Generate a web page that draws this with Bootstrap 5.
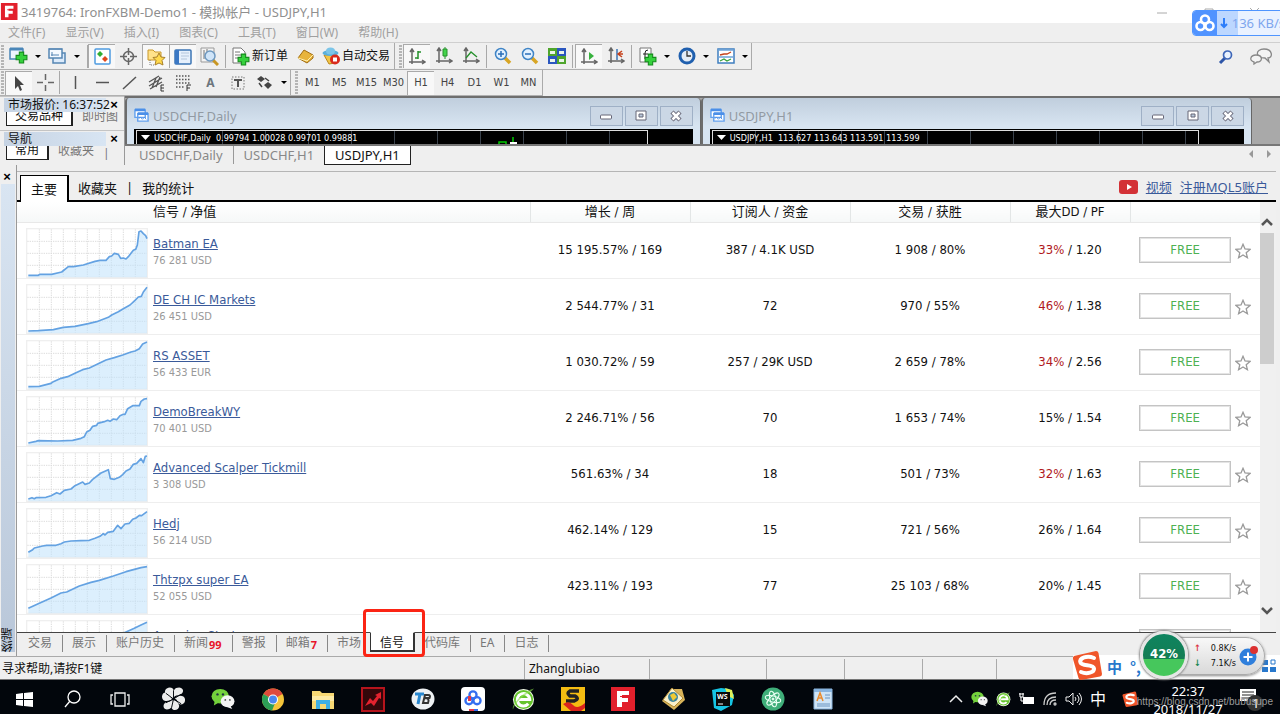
<!DOCTYPE html>
<html lang="zh-CN">
<head>
<meta charset="utf-8">
<meta name="viewport" content="width=device-width, initial-scale=1">
<title>3419764: IronFXBM-Demo1 - 模拟帐户 - USDJPY,H1</title>
<link href="https://cdn.jsdelivr.net/npm/bootstrap@5.3.0/dist/css/bootstrap.min.css" rel="stylesheet">
<script src="https://cdn.jsdelivr.net/npm/bootstrap@5.3.0/dist/js/bootstrap.bundle.min.js" defer></script>
<style>
  body { font: 12px/16px "Noto Sans", "Noto Sans CJK SC", sans-serif; color: #111; background: #efefef; }
  button { border: 0; padding: 0; background: none; color: inherit; font: inherit; }
  svg { flex: none; }
  .desk { height: 100vh; }

  /* title and menu */
  .titlebar { height: 23px; background: #fff; color: #8f8f8f; font-size: 13px; }
  .menubar { height: 20px; border-bottom: 1px solid #cfcfcf; color: #a0a0a0; gap: 20px; padding-left: 8px; }
  .menubar a { color: inherit; text-decoration: none; }

  /* tool bars */
  .toolrow { height: 27px; }
  .toolrow-low { height: 26px; }
  .toolset { border-right: 1px solid #aaa; border-bottom: 1px solid #b0b0b0; }
  .tool { width: 27px; height: 24px; display: flex; align-items: center; justify-content: center; flex: none; }
  .tool.on { background: #f8f8f8; border-top: 1px solid #aaa; border-left: 1px solid #aaa; }
  .tool-text { width: auto; padding: 0 4px 0 3px; gap: 2px; }
  .tool-frame { font-size: 11px; color: #444; font-family: "DejaVu Sans Condensed", sans-serif; }
  .caret { width: 12px; display: flex; justify-content: center; }
  .caret::after { content: ""; border: 3px solid transparent; border-top-color: #000; border-bottom: 0; }
  .divider { width: 1px; height: 23px; background: #a8a8a8; margin: 0 2px; flex: none; }
  .grip { width: 3px; height: 23px; margin: 0 1px; background: repeating-linear-gradient(#b5b5b5 0 2px, #efefef 2px 3px); flex: none; }

  /* side panels */
  .side { width: 125px; border-right: 1px solid #999; }
  .side-panel { height: 34px; border-top: 1px solid #c4c4c4; padding: 1px 4px 0 4px; }
  .side-title { height: 14px; width: 102px; line-height: 14px; padding-left: 4px; font-size: 12px; background: linear-gradient(90deg, #c6d3e3, #d8e5f3); white-space: nowrap; }
  .side-tabs { height: 14px; width: 119px; color: #777; gap: 9px; padding-left: 2px; overflow: hidden; }
  .side-tabs button { white-space: nowrap; line-height: 18px; height: 14px; display: flex; align-items: flex-end; flex: none; }
  .side-tabs .cur { border: 1px solid #222; border-top: 0; border-right-width: 2px; background: #fff; color: #111; padding: 0 8px; }
  .xmark { font: bold 13px/14px "Liberation Sans", sans-serif; width: 12px; color: #000; }

  /* chart windows */
  .mdi { height: 50px; background: #a9a9a9; border-top: 2px solid #6e6e6e; border-bottom: 2px solid #777; }
  .win { background: linear-gradient(#c0cedd, #d7e4f1 28px); border-left: 2px solid #6c6c6c; border-right: 1px solid #666; border-radius: 4px 4px 0 0; padding: 0 7px; min-width: 0; }
  .win-a { flex: 574 1 0; }
  .win-b { flex: 549 1 0; }
  .win-title { height: 31px; color: #929aa3; padding-top: 4px; gap: 2px; font-size: 13px; }
  .win-title span { padding-left: 2px; }
  .win-btn { width: 33px; height: 20px; border: 1px solid #9fb0c6; background: #cbd7e5; display: flex; align-items: center; justify-content: center; }
  .plot { height: 15px; background: #000; padding: 1px 45px 0 2px; }
  .plot-in { border: 1px solid #ddd; border-bottom: 0; height: 14px; color: #fff; font: 9px/15px "DejaVu Sans Condensed", sans-serif; background: repeating-linear-gradient(90deg, transparent 0 42px, #3a424c 42px 43px); white-space: nowrap; overflow: hidden; padding-left: 4px; gap: 4px; }
  .chart-tabs { height: 19px; color: #888; font-size: 13px; padding-left: 4px; }
  .chart-tabs button { height: 18px; padding: 0 10px; border-right: 1px solid #999; line-height: 18px; }
  .chart-tabs .cur { height: 19px; background: #fff; color: #111; border: 1px solid #222; border-top: 0; }

  /* terminal */
  .terminal { min-height: 0; }
  .strip { width: 17px; border-right: 1px solid #999; padding: 5px 0 4px 1px; }
  .strip-bar { background: linear-gradient(#d9e5f2, #b9c7d9); width: 14px; }
  .strip-bar span { writing-mode: vertical-rl; transform: rotate(180deg); line-height: 14px; }
  .panel { border-top: 1px solid #b5b5b5; margin: 6px 4px 0 0; min-width: 0; }
  .panel-tabs { height: 30px; border-bottom: 2px solid #000; font-size: 13px; line-height: 18px; padding-left: 3px; }
  .panel-tabs button { height: 24px; padding: 0 9px; }
  .panel-tabs .cur { height: 27px; background: #fff; border: 1px solid #000; border-right-width: 2px; border-bottom: 0; margin-bottom: -2px; padding: 0 10px; }
  .panel a { color: #3a5a9a; text-decoration: underline; }
  .sheet { background: #fff; min-height: 0; overflow: hidden; }
  .signals { table-layout: fixed; width: 100%; margin: 0; font: 13px/16px "DejaVu Sans Condensed", "Noto Sans CJK SC", sans-serif; text-align: center; }
  .signals th { height: 20px; padding: 0; font-weight: 400; line-height: 18px; background: linear-gradient(#fff, #f6f8f8); border-right: 1px solid #e3e6e6; border-bottom: 1px solid #e8e8e8; }
  .signals th:last-child { border-right: 0; }
  .signals th:first-child { text-align: left; padding-left: 136px; }
  .signals td { height: 56px; padding: 0; border-bottom: 1px solid #eee; vertical-align: middle; }
  .w-a { width: 160px; } .w-b { width: 120px; } .w-c { width: 130px; }
  .sig { height: 55px; padding: 5px 0 0 9px; gap: 5px; text-align: left; }
  .sig small { font-size: 11px; color: #999; line-height: 16px; }
  .sig div { padding-top: 8px; }
  .red { color: #b01820; }
  .free { width: 92px; height: 26px; border: 1px solid #c4c4c4; box-shadow: inset 0 0 0 1px #e4e4e4; color: #4db152; background: #fff; }
  .spark polyline { fill: none; stroke: #64a2e2; stroke-width: 5; stroke-linejoin: round; }
  .spark polygon { fill: #bfe2fc; fill-opacity: .55; }
  .scroller { width: 16px; background: #f0f0f0; padding: 11px 0 0; }
  .scroller i { display: block; height: 131px; width: 14px; background: #cdcdcd; }
  .foot-tabs { height: 24px; border-top: 1px solid #444; color: #777; padding-left: 2px; }
  .foot-tabs button { height: 17px; margin-top: 2px; padding: 0 10px 0 9px; border-right: 1px solid #888; line-height: 15px; white-space: nowrap; display: flex; }
  .foot-tabs button.plain { border-right: 0; padding-right: 9px; }
  .foot-tabs .cur { height: 20px; margin-top: -1px; background: #fff; color: #111; border: 1px solid #333; border-top-color: #fff; border-width: 1px 2px 2px 1px; padding: 2px 9px 0; position: relative; }
  .foot-tabs b { color: #e8142a; font: bold 11px/16px "Noto Sans", sans-serif; padding: 2px 0 0 1px; }
  .marker { position: absolute; inset: -24px -12px -7px -8px; border: 3px solid #fb2414; border-radius: 4px; }

  /* status bar */
  .status { height: 24px; border-top: 1px solid #aaa; border-bottom: 1px solid #777; padding: 2px 0 0 2px; line-height: 20px; }
  .status span { border-left: 1px solid #aaa; padding-left: 4px; }
  .s-a { width: 125px; } .s-b { width: 117px; } .s-c { width: 78px; } .s-d { width: 74px; } .s-e { width: 77px; } .s-f { width: 207px; }

  /* task bar */
  .taskbar { height: 34px; background: #02060c; color: #fff; overflow: hidden; }
  .task { width: 50px; height: 34px; display: flex; align-items: center; justify-content: center; padding-top: 4px; flex: none; }
  .task-s { width: 48px; }
  .tray { padding-top: 4px; }
  .clock { font-size: 13px; line-height: 18px; width: 84px; text-align: center; white-space: nowrap; height: 34px; margin-top: -8px; }

  /* floating widgets */
  .netbox { position: absolute; top: 10px; right: -6px; width: 94px; height: 26px; border: 1px solid #4f95ff; border-radius: 4px; background: #eaf2ff; overflow: hidden; color: #7ea6ee; line-height: 24px; white-space: nowrap; }
  .netbox .logo { width: 29px; background: #5093ff; }
  .netbox .rate { background: linear-gradient(90deg, #bcd7ff 21px, #eaf2ff 21px); padding-left: 3px; font-size: 13px; }
  .ime { position: absolute; right: 0; bottom: 35px; width: 207px; height: 24px; background: #fff; padding-left: 34px; gap: 8px; color: #2878cc; font: bold 15px/24px "Noto Sans CJK SC", sans-serif; }
  .ime .s-logo { position: absolute; left: -1px; bottom: -1px; }
  .ime .grid-logo { position: absolute; right: 4px; bottom: 6px; }
  .speed { position: absolute; right: 15px; bottom: 39px; width: 106px; height: 38px; border-radius: 0 19px 19px 0; background: linear-gradient(#f8f8f8, #d9d9d9); border: 1px solid #aaa; font: 9px/15px "DejaVu Sans Condensed", sans-serif; padding: 3px 28px 0 34px; box-shadow: 0 1px 3px #888; }
  .ball { position: absolute; left: -20px; bottom: -5px; width: 48px; height: 48px; border-radius: 50%; border: 3px solid #e6e6e6; box-shadow: 0 0 2px 1px #888; background: linear-gradient(#0e8460 0, #147d53 60%, #46c75c 60%); color: #fff; font: bold 13px/40px "DejaVu Sans Condensed", sans-serif; text-align: center; }
  .plus { position: absolute; right: 5px; bottom: 8px; }
  .watermark { position: absolute; right: 7px; bottom: 4px; font: 10px/16px "Liberation Sans", sans-serif; color: #9b9b9b; white-space: nowrap; }
</style>
</head>
<body class="overflow-hidden position-relative">
<svg width="0" height="0" class="position-absolute">
  <defs>
    <symbol id="gridlines" viewBox="0 0 366 150">
      <rect x="2" y="2" width="362" height="146" fill="#fff" stroke="#efefef" stroke-width="4"/>
      <path d="M40 4V146M76 4V146M112 4V146M148 4V146M184 4V146M220 4V146M256 4V146M292 4V146M328 4V146M4 40H362M4 76H362M4 112H362" stroke="#dcdcdc" stroke-width="3" stroke-dasharray="4 3"/>
    </symbol>
    <symbol id="star" viewBox="0 0 16 16"><path d="M8 1.300 10 6l5 .400-3.800 3.300 1.200 5L8 12l-4.400 2.700 1.200-5L1 6.400 6 6z" fill="#fff" stroke="#999" stroke-width="1.300"/></symbol>
    <symbol id="wechat" viewBox="0 0 26 24"><ellipse cx="10" cy="9" rx="9.500" ry="8" fill="#74d13c"/><path d="M4 14 3 19l5-3z" fill="#74d13c"/><circle cx="7" cy="7" r="1.300" fill="#234"/><circle cx="13" cy="7" r="1.300" fill="#234"/><ellipse cx="18" cy="14.500" rx="7.500" ry="6.500" fill="#f4f4f4"/><path d="m21 19 2 4-5-2z" fill="#f4f4f4"/><circle cx="15.500" cy="13" r="1" fill="#555"/><circle cx="20.500" cy="13" r="1" fill="#555"/></symbol>
    <symbol id="ebrowser" viewBox="0 0 24 24"><circle cx="12" cy="12.500" r="11" fill="#f2fbe9"/><circle cx="12" cy="12.500" r="10" fill="#65c32c"/><path d="M6 12.500h12.500a6.500 6.500 0 1 0-1.500 4.500" fill="none" stroke="#fff" stroke-width="3.200"/><path d="M1 23C-1 17 14 3 23 1c-3 4-7 5-11 8S3 17 1 23z" fill="#8be04a" opacity=".6"/></symbol>
    <symbol id="sogou" viewBox="0 0 30 30"><path d="M2 6 24 1q2 0 2.500 2L30 24q0 2-2 2.500L9 30q-2 0-2.500-2L1 9q-.500-2 1-3z" fill="#f0562a"/><path d="M22 8C15 5 7 8 8.500 12.500c1.500 4 13 1.500 13.500 6 .500 4-7 6-13 3.500" fill="none" stroke="#fff" stroke-width="4" stroke-linecap="round"/></symbol>
    <symbol id="cloud" viewBox="0 0 20 18"><g fill="none" stroke="currentColor" stroke-width="2.600"><circle cx="10" cy="5.500" r="4"/><circle cx="5.500" cy="12" r="4"/><circle cx="14.500" cy="12" r="4"/></g></symbol>
    <symbol id="redf" viewBox="0 0 24 24"><path fill="#e2202c" d="M0 0h24v24H0z"/><path fill="#fff" d="M6 4h12v4h-7v3h6v4h-6v5H6z"/><path d="M9 9.500h8" stroke="#e2202c"/></symbol>
    <symbol id="axes" viewBox="0 0 18 18"><path d="M4 2v14M1 14h15M2 4l2-3 2 3M14 12l3 2-3 2" fill="none" stroke="#666" stroke-width="1.500"/></symbol>
    <symbol id="minis" viewBox="0 0 12 8"><rect x=".5" y="3" width="11" height="4" rx="1" fill="#fff" stroke="#667"/></symbol>
    <symbol id="maxis" viewBox="0 0 12 12"><path d="M1 1h10v9H1z" fill="#fff" stroke="#667"/><path d="M4 4h4v3H4z" fill="#b9c8da" stroke="#667"/></symbol>
    <symbol id="closes" viewBox="0 0 12 12"><path d="m2 2 8 8M10 2l-8 8" stroke="#667" stroke-width="4.500"/><path d="m2.500 2.500 7 7M9.500 2.500l-7 7" stroke="#fff" stroke-width="2.500"/></symbol>
    <symbol id="chartdoc" viewBox="0 0 16 16"><path d="M1 2h11v8H1zM4 6h11v8H4z" fill="#fff" stroke="#62a0ee" stroke-width="1.500"/><path d="M1 2h11M4 6h11" stroke="#4b8fe8" stroke-width="3"/><path d="m5 11 2-1 2 2 2-2 2 2" fill="none" stroke="#4b8fe8"/></symbol>
    <symbol id="greenplus" viewBox="0 0 12 12"><path d="M4 1h4v3h3v4H8v3H4V8H1V4h3z" fill="#35d13c" stroke="#158b1c"/></symbol>
  </defs>
</svg>

<div class="desk d-flex flex-column">
  <header class="titlebar d-flex align-items-center flex-shrink-0">
    <svg width="21" height="17" viewBox="-1 0 25 24" preserveAspectRatio="xMinYMid"><use href="#redf" width="24" height="24"/></svg>
    <span>3419764: IronFXBM-Demo1 - 模拟帐户 - USDJPY,H1</span>
    <svg class="ms-auto me-3" width="108" height="14" viewBox="0 0 108 14" fill="none" stroke="#aaa"><path d="M1 8h10M47 7h8v7h-8zM49 7V4h8v8h-2M94 3l9 9M103 3l-9 9"/></svg>
  </header>
  <nav class="menubar d-flex align-items-center flex-shrink-0">
    <a href="#">文件(F)</a><a href="#">显示(V)</a><a href="#">插入(I)</a><a href="#">图表(C)</a><a href="#">工具(T)</a><a href="#">窗口(W)</a><a href="#">帮助(H)</a>
  </nav>

  <div class="toolrow d-flex flex-shrink-0">
    <div class="toolset d-flex align-items-center">
      <span class="grip"></span>
      <button class="tool" aria-label="新图表"><svg width="19" height="18" viewBox="0 0 19 18"><path d="M1 2h13v10H1z" fill="#eef5ff" stroke="#4a86b8" stroke-width="1.500"/><path d="M1 2h13" stroke="#4a86b8" stroke-width="3"/><use href="#greenplus" x="6" y="4" width="13" height="13"/></svg></button><span class="caret"></span>
      <button class="tool" aria-label="配置"><svg width="19" height="18" viewBox="0 0 19 18"><path d="M5 6h12v10H5z" fill="#dcebfb" stroke="#5686b4" stroke-width="1.500"/><path d="M1 2h13v9H1z" fill="#f4f9ff" stroke="#5686b4" stroke-width="1.500"/><path d="M3 8h8M4 5v4M1 2h13" stroke="#5686b4"/></svg></button><span class="caret me-1"></span>
      <span class="divider ms-0 me-0"></span>
      <button class="tool on" aria-label="市场报价"><svg width="17" height="17" viewBox="0 0 17 17"><rect x="1" y="1" width="15" height="15" rx="1" fill="#fff" stroke="#4d9ae0" stroke-width="1.500"/><path d="m6 3 3 3-3 3-3-3z" fill="#2fae32"/><path d="m11 8 3 3-3 3-3-3z" fill="#e0481c"/></svg></button>
      <button class="tool" aria-label="数据窗口"><svg width="17" height="17" viewBox="0 0 17 17" fill="none" stroke="#666" stroke-width="1.500"><circle cx="8.500" cy="8.500" r="5"/><path d="M8.500 0v7M8.500 10v7M0 8.500h7M10 8.500h7"/></svg></button>
      <button class="tool on" aria-label="导航"><svg width="19" height="18" viewBox="0 0 19 18"><path d="M1 2h5l2 2h6v8H1z" fill="#ffe28a" stroke="#c9982a"/><path d="M3 12v5h5" fill="none" stroke="#777" stroke-dasharray="1 1"/><path d="m12 5 2 4 4 .500-3 3 1 4.500-4-2-4 2 1-4.500-3-3 4-.500z" fill="#ffd94c" stroke="#a8802a"/></svg></button>
      <button class="tool on" aria-label="终端"><svg width="18" height="16" viewBox="0 0 18 16"><rect x="1" y="1" width="16" height="14" rx="1" fill="#e6f0fc" stroke="#3b74b4" stroke-width="1.500"/><path d="M1 1h4v14H1z" fill="#3b78c4"/><path d="M7 4h8M7 7h8M7 10h6" stroke="#b4c6dc"/></svg></button>
      <button class="tool" aria-label="策略测试"><svg width="19" height="19" viewBox="0 0 19 19"><path d="M1 1h13v14H1z" fill="#f4f4f4" stroke="#999"/><path d="M4 3v9M7 2v7" stroke="#777"/><path d="m13 13 5 5" stroke="#c89622" stroke-width="3"/><circle cx="10" cy="9" r="5" fill="#cfe4f8" stroke="#6d98c0" stroke-width="1.500"/></svg></button>
      <span class="divider"></span>
      <button class="tool tool-text"><svg width="19" height="19" viewBox="0 0 19 19"><path d="M2 1h8l4 4v11H2z" fill="#fff" stroke="#777"/><path d="M4 5h5M4 8h7M4 11h5" stroke="#777"/><use href="#greenplus" x="6" y="6" width="13" height="13"/></svg>新订单</button>
      <button class="tool" aria-label="编辑器"><svg width="17" height="15" viewBox="0 0 17 15"><path d="m1 9 6-8 9 5v3l-6 5z" fill="#e8b43c" stroke="#a06c12"/><path d="m1 9 9 3 6-6" fill="none" stroke="#fff0b0"/></svg></button>
      <button class="tool tool-text"><svg width="18" height="18" viewBox="0 0 18 18"><path d="M2 8h13l-2 8-6 1z" fill="#f2c546" stroke="#b9861d"/><ellipse cx="8.500" cy="6" rx="8" ry="3" fill="#5bb0dc"/><ellipse cx="8.500" cy="4" rx="4.500" ry="3.500" fill="#7cc5e8"/><circle cx="13" cy="12.500" r="5" fill="#d92a1c"/><path d="M11 10.500h4v4h-4z" fill="#fff"/></svg>自动交易</button>
    </div>
    <div class="toolset d-flex align-items-center">
      <span class="grip ms-1"></span>
      <button class="tool on" aria-label="柱状图"><svg width="18" height="18" viewBox="0 0 18 18"><use href="#axes"/><path d="M10 3v8M10 4h3M7 10h3" stroke="#25902b" stroke-width="1.500"/></svg></button>
      <button class="tool" aria-label="阴阳烛"><svg width="18" height="18" viewBox="0 0 18 18"><use href="#axes"/><path d="M10 0v12" stroke="#25902b"/><path d="M8 2h4v7H8z" fill="#42d34a" stroke="#25902b"/></svg></button>
      <button class="tool" aria-label="折线图"><svg width="18" height="18" viewBox="0 0 18 18"><use href="#axes"/><path d="m4 11 5-6 6 5" fill="none" stroke="#25902b" stroke-width="1.300"/></svg></button>
      <span class="divider"></span>
      <button class="tool" aria-label="放大"><svg width="18" height="18" viewBox="0 0 18 18"><path d="m11 11 5 5" stroke="#d8a524" stroke-width="3.500"/><circle cx="7" cy="7" r="5.500" fill="#e2f1ff" stroke="#3f84c6" stroke-width="1.500"/><path d="M4 7h6M7 4v6" stroke="#2a6eb8" stroke-width="1.500"/></svg></button>
      <button class="tool" aria-label="缩小"><svg width="18" height="18" viewBox="0 0 18 18"><path d="m11 11 5 5" stroke="#d8a524" stroke-width="3.500"/><circle cx="7" cy="7" r="5.500" fill="#e2f1ff" stroke="#3f84c6" stroke-width="1.500"/><path d="M4 7h6" stroke="#2a6eb8" stroke-width="1.500"/></svg></button>
      <button class="tool" aria-label="平铺"><svg width="18" height="18" viewBox="0 0 18 18"><path d="M0 1h9v8H0zM9 9h9v8H9z" fill="#4fa52c"/><path d="M9 1h9v8H9zM0 9h9v8H0z" fill="#2a56bf"/><path d="M2 4h5v3H2zM11 4h5v3h-5zM2 12h5v3H2zM11 12h5v3h-5z" fill="#eaf4ea"/></svg></button>
      <span class="divider"></span>
      <button class="tool on" aria-label="自动滚动"><svg width="18" height="18" viewBox="0 0 18 18"><use href="#axes"/><path d="m9 4 5 4-5 4z" fill="#38b23e"/></svg></button>
      <button class="tool" aria-label="图表平移"><svg width="18" height="18" viewBox="0 0 18 18"><use href="#axes"/><path d="M10 2v11" stroke="#3b74b4" stroke-width="1.500"/><path d="m15 4-4 3 4 3M11 7h5" fill="none" stroke="#c5421c" stroke-width="1.500"/></svg></button>
      <span class="divider"></span>
      <button class="tool" aria-label="指标"><svg width="18" height="19" viewBox="0 0 18 19"><path d="M1 1h11v14H1z" fill="#fff" stroke="#777"/><path d="M9 3Q6 3 6 6v6M4 7h5" fill="none" stroke="#222"/><use href="#greenplus" x="5" y="6" width="13" height="13"/></svg></button><span class="caret"></span>
      <button class="tool" aria-label="周期"><svg width="18" height="18" viewBox="0 0 18 18"><circle cx="9" cy="9" r="7" fill="#e4ecf6" stroke="#1f5fae" stroke-width="3"/><path d="M9 4v5h4" fill="none" stroke="#333" stroke-width="1.300"/></svg></button><span class="caret"></span>
      <button class="tool" aria-label="模板"><svg width="18" height="16" viewBox="0 0 18 16"><path d="M1 1h16v14H1z" fill="#fff" stroke="#3f7fc0" stroke-width="1.500"/><path d="M1 2h16M1 9h16" stroke="#6da3d8" stroke-width="1.500"/><path d="m3 7 4-1 3 0 4-2" fill="none" stroke="#c5421c" stroke-width="1.300"/><path d="m3 13 4-2 3 2 4-2" fill="none" stroke="#38a23e" stroke-width="1.300"/></svg></button><span class="caret"></span>
    </div>
    <div class="ms-auto d-flex align-items-center gap-3 pe-1">
      <button aria-label="搜索"><svg width="16" height="16" viewBox="0 0 16 16"><path d="M7 9 2 14" stroke="#2d55a8" stroke-width="3"/><circle cx="9.500" cy="6" r="4" fill="#e9f2ff" stroke="#3d66b8" stroke-width="1.700"/></svg></button>
      <button class="me-1" aria-label="消息"><svg width="22" height="17" viewBox="0 0 22 17" fill="#f4f4f4" stroke="#888" stroke-width="1.300"><path d="M14 1c9 0 9 9 4 9l1 4-4-4C5 10 5 1 14 1z"/><path d="M6 7c7 0 7 7 1 7l-3 2v-2C-1 13 0 7 6 7z"/></svg></button>
    </div>
  </div>

  <div class="toolrow-low d-flex flex-shrink-0">
    <div class="toolset d-flex align-items-center">
      <span class="grip"></span>
      <button class="tool on" aria-label="光标"><svg width="12" height="17" viewBox="0 0 12 17"><path d="M2 1v13l3-3 2 5 2-1-2-5h4z" fill="#444"/></svg></button>
      <button class="tool" aria-label="十字"><svg width="17" height="17" viewBox="0 0 17 17"><path d="M8.500 0v6M8.500 11v6M0 8.500h6M11 8.500h6" stroke="#666" stroke-width="1.500"/></svg></button>
      <span class="divider ms-0"></span>
      <button class="tool" aria-label="垂直线"><svg width="17" height="17"><path d="M8.500 2v13" stroke="#555" stroke-width="1.500"/></svg></button>
      <button class="tool" aria-label="水平线"><svg width="17" height="17"><path d="M2 8.500h13" stroke="#555" stroke-width="1.500"/></svg></button>
      <button class="tool" aria-label="趋势线"><svg width="17" height="17"><path d="M2 15 15 3" stroke="#555" stroke-width="1.500"/></svg></button>
      <button class="tool" aria-label="通道"><svg width="18" height="18" viewBox="0 0 18 18"><path d="M1 8 11 2M1 12 14 4M2 15 14 8M4 14 8 4M8 13 12 3" stroke="#555" stroke-width="1.300"/><path d="M16 11h-3v6h3M13 14h3" fill="none" stroke="#333"/></svg></button>
      <button class="tool" aria-label="斐波纳契"><svg width="18" height="18" viewBox="0 0 18 18"><path d="M1 2h14M1 5.500h14M1 9h14M1 13h9" stroke="#555" stroke-width="1.300" stroke-dasharray="1.500 1.500"/><path d="M16 11h-4v6M12 14h3" fill="none" stroke="#333"/></svg></button>
      <button class="tool fw-bold text-secondary">A</button>
      <button class="tool" aria-label="文本标签"><svg width="16" height="16" viewBox="0 0 16 16"><path d="M2 2h12v12H2z" fill="none" stroke="#777" stroke-dasharray="1.500 1.500"/><path d="M4 5h8M8 5v7" stroke="#555" stroke-width="2"/></svg></button>
      <button class="tool" aria-label="箭头"><svg width="17" height="15" viewBox="0 0 17 15"><path d="m1 4 4-3 4 3-4 3zM8 10l4-3 4 3-4 4z" fill="#444"/><path d="m3 8 3 4M9 3l4 3" stroke="#444" stroke-width="1.500"/></svg></button><span class="caret"></span>
    </div>
    <div class="toolset d-flex align-items-center tool-frame">
      <span class="grip ms-1"></span>
      <button class="tool">M1</button><button class="tool">M5</button><button class="tool">M15</button><button class="tool">M30</button><button class="tool on">H1</button><button class="tool">H4</button><button class="tool">D1</button><button class="tool">W1</button><button class="tool">MN</button>
    </div>
  </div>

  <div class="d-flex flex-shrink-0">
    <aside class="side flex-shrink-0">
      <section class="side-panel">
        <div class="d-flex justify-content-between"><div class="side-title">市场报价: 16:37:52</div><button class="xmark" aria-label="关闭">×</button></div>
        <div class="side-tabs d-flex"><button class="cur">交易品种</button><button>即时图</button></div>
      </section>
      <section class="side-panel">
        <div class="d-flex justify-content-between"><div class="side-title">导航</div><button class="xmark" aria-label="关闭">×</button></div>
        <div class="side-tabs d-flex"><button class="cur">常用</button><button>收藏夹</button><span>|</span></div>
      </section>
    </aside>
    <main class="flex-grow-1">
      <div class="mdi d-flex overflow-hidden">
        <section class="win win-a">
          <div class="win-title d-flex align-items-center">
            <svg width="15" height="15"><use href="#chartdoc"/></svg><span class="me-auto">USDCHF,Daily</span>
            <button class="win-btn" aria-label="最小化"><svg width="12" height="8"><use href="#minis"/></svg></button><button class="win-btn" aria-label="最大化"><svg width="12" height="12"><use href="#maxis"/></svg></button><button class="win-btn" aria-label="关闭"><svg width="12" height="12"><use href="#closes"/></svg></button>
          </div>
          <div class="plot"><div class="plot-in d-flex"><svg width="9" height="13" viewBox="0 0 9 13"><path d="M0 4h9L4.500 9z" fill="#fff"/></svg><span>USDCHF,Daily&nbsp; 0.99794 1.00028 0.99701 0.99881</span><svg class="ms-auto me-5" width="110" height="13"><path d="M10 13v-2h7v2M24 6v6" fill="none" stroke="#0c0" stroke-width="1.500"/><path d="M21 11h7v2h-7z" fill="#fff"/></svg></div></div>
        </section>
        <section class="win win-b">
          <div class="win-title d-flex align-items-center">
            <svg width="15" height="15"><use href="#chartdoc"/></svg><span class="me-auto">USDJPY,H1</span>
            <button class="win-btn" aria-label="最小化"><svg width="12" height="8"><use href="#minis"/></svg></button><button class="win-btn" aria-label="最大化"><svg width="12" height="12"><use href="#maxis"/></svg></button><button class="win-btn" aria-label="关闭"><svg width="12" height="12"><use href="#closes"/></svg></button>
          </div>
          <div class="plot"><div class="plot-in d-flex"><svg width="9" height="13" viewBox="0 0 9 13"><path d="M0 4h9L4.500 9z" fill="#fff"/></svg><span>USDJPY,H1&nbsp; 113.627 113.643 113.591 113.599</span></div></div>
        </section>
        <div class="pe-4 me-1"></div>
      </div>
      <div class="chart-tabs d-flex">
        <button>USDCHF,Daily</button><button class="border-end-0">USDCHF,H1</button><button class="cur">USDJPY,H1</button>
        <svg class="ms-auto me-2" width="24" height="16" viewBox="0 0 24 16" fill="#999"><path d="M5 4v8L1 8zM19 4v8l4-4z"/></svg>
      </div>
    </main>
  </div>

  <div class="terminal d-flex flex-grow-1">
    <div class="strip d-flex flex-column flex-shrink-0">
      <button class="xmark" aria-label="关闭">×</button>
      <div class="strip-bar flex-grow-1 d-flex align-items-end"><span>终端</span></div>
    </div>
    <section class="panel flex-grow-1 d-flex flex-column">
      <div class="panel-tabs d-flex align-items-end flex-shrink-0">
        <button class="cur">主要</button><button>收藏夹</button><span class="pb-1">|</span><button>我的统计</button>
        <div class="ms-auto d-flex align-items-center gap-2 pb-1 me-2">
          <svg width="19" height="14" viewBox="0 0 19 14"><rect width="19" height="14" rx="3" fill="#d33136"/><path d="M8 4v6l5-3z" fill="#fff"/></svg>
          <a href="#">视频</a><a href="#">注册MQL5账户</a>
        </div>
      </div>
      <div class="sheet flex-grow-1 d-flex">
        <div class="flex-grow-1">
          <table class="signals">
            <colgroup><col><col class="w-a"><col class="w-a"><col class="w-a"><col class="w-b"><col class="w-c"></colgroup>
            <thead><tr><th>信号 / 净值</th><th>增长 / 周</th><th>订阅人 / 资金</th><th>交易 / 获胜</th><th>最大DD / PF</th><th></th></tr></thead>
            <tbody>
              <tr><td><div class="sig d-flex"><svg class="spark" width="122" height="50" viewBox="0 0 366 150"><use href="#gridlines"/><polygon points="7,148 7,142 37,142 42,139 77,139 107,132 127,116 142,116 172,111 207,100 222,97 240,97 250,86 257,84 265,76 277,79 284,91 292,90 300,93 307,86 322,67 329,64 334,51 339,11 345,9 352,17 359,23 363,32 363,148"/><polyline points="7,142 37,142 42,139 77,139 107,132 127,116 142,116 172,111 207,100 222,97 240,97 250,86 257,84 265,76 277,79 284,91 292,90 300,93 307,86 322,67 329,64 334,51 339,11 345,9 352,17 359,23 363,32"/></svg><div><a href="#">Batman EA</a><br><small>76 281 USD</small></div></div></td><td>15 195.57% / 169</td><td>387 / 4.1K USD</td><td>1 908 / 80%</td><td><span class="red">33%</span> / 1.20</td><td><button class="free">FREE</button> <svg width="16" height="16"><use href="#star"/></svg></td></tr>
              <tr><td><div class="sig d-flex"><svg class="spark" width="122" height="50" viewBox="0 0 366 150"><use href="#gridlines"/><polygon points="7,148 7,141 37,140 82,137 112,130 147,127 187,119 212,113 247,100 257,93 277,83 292,74 312,63 327,49 337,39 346,37 352,24 363,10 363,148"/><polyline points="7,141 37,140 82,137 112,130 147,127 187,119 212,113 247,100 257,93 277,83 292,74 312,63 327,49 337,39 346,37 352,24 363,10"/></svg><div><a href="#">DE CH IC Markets</a><br><small>26 451 USD</small></div></div></td><td>2 544.77% / 31</td><td>72</td><td>970 / 55%</td><td><span class="red">46%</span> / 1.38</td><td><button class="free">FREE</button> <svg width="16" height="16"><use href="#star"/></svg></td></tr>
              <tr><td><div class="sig d-flex"><svg class="spark" width="122" height="50" viewBox="0 0 366 150"><use href="#gridlines"/><polygon points="7,148 7,140 40,139 75,130 82,125 105,115 125,110 150,98 170,89 190,84 215,72 240,60 265,53 290,45 315,36 327,33 340,26 350,12 363,6 363,148"/><polyline points="7,140 40,139 75,130 82,125 105,115 125,110 150,98 170,89 190,84 215,72 240,60 265,53 290,45 315,36 327,33 340,26 350,12 363,6"/></svg><div><a href="#">RS ASSET</a><br><small>56 433 EUR</small></div></div></td><td>1 030.72% / 59</td><td>257 / 29K USD</td><td>2 659 / 78%</td><td><span class="red">34%</span> / 2.56</td><td><button class="free">FREE</button> <svg width="16" height="16"><use href="#star"/></svg></td></tr>
              <tr><td><div class="sig d-flex"><svg class="spark" width="122" height="50" viewBox="0 0 366 150"><use href="#gridlines"/><polygon points="7,148 7,141 30,136 37,134 95,135 140,133 165,127 175,122 182,108 192,103 200,91 212,88 215,82 235,77 245,73 252,76 262,69 272,71 282,59 292,55 297,55 305,38 320,29 340,29 345,16 355,9 363,8 363,148"/><polyline points="7,141 30,136 37,134 95,135 140,133 165,127 175,122 182,108 192,103 200,91 212,88 215,82 235,77 245,73 252,76 262,69 272,71 282,59 292,55 297,55 305,38 320,29 340,29 345,16 355,9 363,8"/></svg><div><a href="#">DemoBreakWY</a><br><small>70 401 USD</small></div></div></td><td>2 246.71% / 56</td><td>70</td><td>1 653 / 74%</td><td>15% / 1.54</td><td><button class="free">FREE</button> <svg width="16" height="16"><use href="#star"/></svg></td></tr>
              <tr><td><div class="sig d-flex"><svg class="spark" width="122" height="50" viewBox="0 0 366 150"><use href="#gridlines"/><polygon points="7,148 7,141 18,137 25,140 30,137 60,136 75,131 92,122 102,126 115,115 135,111 147,101 170,90 177,97 190,93 200,82 225,63 247,53 253,80 265,82 280,76 290,68 300,57 312,51 322,37 332,34 345,20 352,32 358,13 363,12 363,148"/><polyline points="7,141 18,137 25,140 30,137 60,136 75,131 92,122 102,126 115,115 135,111 147,101 170,90 177,97 190,93 200,82 225,63 247,53 253,80 265,82 280,76 290,68 300,57 312,51 322,37 332,34 345,20 352,32 358,13 363,12"/></svg><div><a href="#">Advanced Scalper Tickmill</a><br><small>3 308 USD</small></div></div></td><td>561.63% / 34</td><td>18</td><td>501 / 73%</td><td><span class="red">32%</span> / 1.63</td><td><button class="free">FREE</button> <svg width="16" height="16"><use href="#star"/></svg></td></tr>
              <tr><td><div class="sig d-flex"><svg class="spark" width="122" height="50" viewBox="0 0 366 150"><use href="#gridlines"/><polygon points="7,148 7,133 20,125 25,120 50,114 62,112 90,112 105,107 115,102 135,99 165,98 190,97 207,91 222,85 232,77 237,81 245,73 262,70 275,52 285,62 297,48 310,46 320,34 330,30 340,22 347,23 363,11 363,148"/><polyline points="7,133 20,125 25,120 50,114 62,112 90,112 105,107 115,102 135,99 165,98 190,97 207,91 222,85 232,77 237,81 245,73 262,70 275,52 285,62 297,48 310,46 320,34 330,30 340,22 347,23 363,11"/></svg><div><a href="#">Hedj</a><br><small>56 214 USD</small></div></div></td><td>462.14% / 129</td><td>15</td><td>721 / 56%</td><td>26% / 1.64</td><td><button class="free">FREE</button> <svg width="16" height="16"><use href="#star"/></svg></td></tr>
              <tr><td><div class="sig d-flex"><svg class="spark" width="122" height="50" viewBox="0 0 366 150"><use href="#gridlines"/><polygon points="7,148 7,133 40,118 75,102 105,87 122,84 160,66 195,55 220,49 262,36 300,23 345,11 363,8 363,148"/><polyline points="7,133 40,118 75,102 105,87 122,84 160,66 195,55 220,49 262,36 300,23 345,11 363,8"/></svg><div><a href="#">Thtzpx super EA</a><br><small>52 055 USD</small></div></div></td><td>423.11% / 193</td><td>77</td><td>25 103 / 68%</td><td>20% / 1.45</td><td><button class="free">FREE</button> <svg width="16" height="16"><use href="#star"/></svg></td></tr>
              <tr><td><div class="sig d-flex"><svg class="spark" width="122" height="50" viewBox="0 0 366 150"><use href="#gridlines"/><polygon points="7,148 7,133 150,100 300,36 325,25 345,15 363,7 363,148"/><polyline points="7,133 150,100 300,36 325,25 345,15 363,7"/></svg><div><a href="#">Amazing Start</a></div></div></td><td></td><td></td><td></td><td></td><td><button class="free">FREE</button> <svg width="16" height="16"><use href="#star"/></svg></td></tr>
            </tbody>
          </table>
        </div>
        <div class="scroller d-flex flex-column justify-content-between flex-shrink-0">
          <div><svg width="14" height="20" viewBox="0 0 14 20" class="d-block" fill="none" stroke="#555" stroke-width="2.500"><path d="m2 12 5-5 5 5"/></svg><i></i></div>
          <svg width="14" height="36" viewBox="0 0 14 36" fill="none" stroke="#555" stroke-width="2.500"><path d="m2 12 5 5 5-5"/></svg>
        </div>
      </div>
      <nav class="foot-tabs d-flex align-items-start flex-shrink-0">
        <button>交易</button><button>展示</button><button>账户历史</button><button>新闻<b>99</b></button><button>警报</button><button>邮箱<b>7</b></button><button class="plain">市场</button><button class="cur">信号<span class="marker"></span></button><button>代码库</button><button>EA</button><button>日志</button>
      </nav>
    </section>
  </div>

  <footer class="status d-flex flex-shrink-0">
    <div class="flex-grow-1">寻求帮助,请按F1键</div><span class="s-a">Zhanglubiao</span><span class="s-b"></span><span class="s-c"></span><span class="s-c"></span><span class="s-d"></span><span class="s-e"></span><span class="s-f"></span>
  </footer>

  <div class="taskbar d-flex flex-shrink-0">
    <button class="task task-s" aria-label="开始"><svg width="17" height="17" viewBox="0 0 17 17" fill="#fff"><path d="m0 3 7-1v6H0zM8 2l9-1v7H8zM0 9h7v6l-7-1zM8 9h9v7l-9-1z"/></svg></button>
    <button class="task task-s" aria-label="搜索"><svg width="17" height="19" viewBox="0 0 17 19" fill="none" stroke="#fff" stroke-width="1.300"><circle cx="10" cy="7" r="6"/><path d="m6 11-5 6"/></svg></button>
    <button class="task task-s" aria-label="任务视图"><svg width="20" height="15" viewBox="0 0 20 15" fill="none" stroke="#eee" stroke-width="1.300"><path d="M5 1h10v13H5zM3 3H1v9h2M17 3h2v9h-2"/></svg></button>
    <button class="task ms-1" aria-label="风扇"><svg width="23" height="24" viewBox="0 0 24 24" fill="#ececec"><path d="M12 11C2 11 0 1 8 0c5 0 5 5 4 11z"/><path d="M12 11C11 3 13 0 18 0c6 1 5 7-1 8-3 0-4 1-5 3z"/><path d="M13 12c2-4 10-5 11 0 1 6-7 8-8 2-1-2-2-2-3-2z"/><path d="M12 13c4 1 5 3 6 6 0 5-7 6-8 2-1-3 0-6 2-8z"/><path d="M11 12c1 6-1 11-6 11-5-1-4-7 0-8 3 0 5-1 6-3z"/><path d="M11 12C6 15 0 15 0 9c1-6 8-4 8 0 1 2 2 2 3 3z"/><path d="M12 12V3M12 12l8-5M12 12l8 5M12 12l-2 9M12 12l-8 4M12 12 4 6" stroke="#02060c"/></svg></button>
    <button class="task" aria-label="微信"><svg width="24" height="22"><use href="#wechat"/></svg></button>
    <button class="task" aria-label="Chrome"><svg width="22" height="23" viewBox="0 0 24 24"><circle cx="12" cy="12" r="12" fill="#f4c43a"/><path d="M12 12 1.600 6a12 12 0 0 1 20.800 0z" fill="#de4a3c"/><path d="M1.600 6A12 12 0 0 0 11 24l4-10-3-2z" fill="#2c9e56"/><circle cx="12" cy="12" r="5.500" fill="#fff"/><circle cx="12" cy="12" r="4.300" fill="#4a87ee"/></svg></button>
    <button class="task" aria-label="文件夹"><svg width="22" height="19" viewBox="0 0 22 19"><path d="M0 1h8l2 2h12v16H0z" fill="#f7d874"/><path d="M0 6h22v5H0z" fill="#fdeaa4"/><path d="M4 10h14v9h-4v-5H8v5H4z" fill="#3fb0e6"/></svg></button>
    <button class="task" aria-label="行情"><svg width="24" height="25" viewBox="0 0 24 25"><path d="M1 1h22v23H1z" fill="#34070a" stroke="#b5141c" stroke-width="2"/><path d="m4 19 5-8 3 3 4-5-2-1 6-3v7l-2-1-5 8-3-3z" fill="#e3222e"/></svg></button>
    <button class="task" aria-label="TB"><svg width="24" height="22" viewBox="0 0 24 22"><ellipse cx="12" cy="11" rx="11.500" ry="10.500" fill="#eef1f4"/><path d="M4 6h9M9 6 7 16" stroke="#2a88d0" stroke-width="3"/><path d="M14 7h3q3 0 1.500 3H14q5 0 3 5h-5z" fill="none" stroke="#333" stroke-width="2"/></svg></button>
    <button class="task" aria-label="网盘"><svg width="24" height="24" viewBox="0 0 24 24"><rect width="24" height="24" rx="4" fill="#fff"/><use href="#cloud" x="3" y="3" width="18" height="16" color="#346ef0"/><path d="M7 9h3v5H7z" fill="#e83746"/><path d="M8 23h5" stroke="#e83746" stroke-width="2"/><path d="M13 23h4" stroke="#346ef0" stroke-width="2"/></svg></button>
    <button class="task" aria-label="浏览器"><svg width="23" height="24"><use href="#ebrowser"/></svg></button>
    <button class="task" aria-label="S"><svg width="24" height="24" viewBox="0 0 24 24"><path d="M0 0h24v24H0z" fill="#f4bc12"/><path d="M18 4H9Q5 6 9 9h5q5 3-1 5H5" fill="none" stroke="#222" stroke-width="3.500"/><path d="M2 17q6-4 10 1t12-2v5l-4 3H10z" fill="#da241d"/></svg></button>
    <button class="task" aria-label="IronFX"><svg width="24" height="24"><use href="#redf"/></svg></button>
    <button class="task" aria-label="地图"><svg width="25" height="24" viewBox="0 0 25 24"><path d="m1 14 12 9 11-10-3-11H10z" fill="#d9b45a"/><path d="m2 13 11 7 9-9L11 1z" fill="#fbf1ca" stroke="#b08a34"/><circle cx="12" cy="10" r="5" fill="#3b84a0"/><path d="m9 8 4-2 3 4-4 4z" fill="#f0ca34"/></svg></button>
    <button class="task" aria-label="WebStorm"><svg width="24" height="24" viewBox="0 0 24 24"><path d="m1 3 9-2 8 1 5 6-2 10-11 6-7-3z" fill="#16c4e4"/><path d="m14 1 7 2 2 9-6-3z" fill="#dff05a"/><path d="M5 5h14v14H5z" fill="#0a0a0a"/><text x="6" y="12" font-size="7" font-weight="700" fill="#fff">WS</text><path d="M7 17h5" stroke="#fff"/></svg></button>
    <button class="task" aria-label="Atom"><svg width="24" height="24" viewBox="0 0 24 24" fill="none" stroke="#e8fff2"><circle cx="12" cy="12" r="11.500" fill="#3fae79" stroke="none"/><ellipse cx="12" cy="12" rx="8" ry="3" transform="rotate(15 12 12)"/><ellipse cx="12" cy="12" rx="8" ry="3" transform="rotate(75 12 12)"/><ellipse cx="12" cy="12" rx="8" ry="3" transform="rotate(135 12 12)"/><circle cx="12" cy="12" r="1" fill="#fff"/></svg></button>
    <button class="task" aria-label="文档"><svg width="20" height="22" viewBox="0 0 20 22"><path d="M1 1h18v20H1z" fill="#cfe4f6" stroke="#8ab4dc"/><path d="M1 1h18v3H1z" fill="#88b4e0"/><path d="m4 13 3-8 3 8M5 10h4" fill="none" stroke="#ea8a2c" stroke-width="1.500"/><path d="M12 7h5M12 10h5M4 16h13M4 18h13" stroke="#6a94c0"/></svg></button>

    <div class="tray ms-auto d-flex align-items-center">
      <svg class="me-2" width="14" height="10" viewBox="0 0 14 10" fill="none" stroke="#eee" stroke-width="1.500"><path d="m1 8 6-6 6 6"/></svg>
      <svg class="me-2" width="17" height="16"><use href="#wechat"/></svg>
      <svg class="me-2" width="15" height="16"><use href="#ebrowser"/></svg>
      <svg class="me-2" width="16" height="12" viewBox="0 0 16 12"><path d="M4 4h11v7H4z" fill="#fff"/><path d="M0 1h5M1 0v4h3V0M2 4v4h3" fill="none" stroke="#fff"/></svg>
      <svg class="me-2" width="14" height="14" viewBox="0 0 14 14" fill="none" stroke="#ccc" stroke-width="1.300"><path d="M1 13Q1 1 13 1M4 13q0-8 9-8M7 13q0-5 6-5"/><circle cx="12" cy="12" r="1"/></svg>
      <svg class="me-2" width="17" height="14" viewBox="0 0 17 14" fill="none" stroke="#eee"><path d="M1 5h3l4-4v12L4 9H1zM10 5q2 2 0 4M12 3q4 4 0 8M14 1q5 6 0 12"/></svg>
      <span class="fs-6 me-3">中</span>
      <svg width="16" height="16"><use href="#sogou"/></svg>
      <div class="clock ms-2 pt-1">22:37<br>2018/11/27</div>
      <svg class="ms-2 me-3" width="26" height="27" viewBox="0 0 26 27"><path d="M2 3h16v12h-6l-3 3v-3H2z" fill="#fff"/><path d="M4 6h12M4 9h12M4 12h8" stroke="#222"/><circle cx="17" cy="17" r="8" fill="#333"/><text x="14" y="22" font-size="13" fill="#fff">1</text></svg>
    </div>
  </div>
</div>

<div class="netbox d-flex">
  <span class="logo text-white d-flex align-items-center justify-content-center"><svg width="20" height="18"><use href="#cloud"/></svg></span>
  <span class="rate flex-grow-1 d-flex align-items-center gap-1"><svg width="8" height="11" viewBox="0 0 8 11" fill="none" stroke="#2c7dfa" stroke-width="2"><path d="M4 0v9M1 6l3 3 3-3"/></svg>136 KB/s</span>
</div>
<div class="ime d-flex">
  <svg class="s-logo" width="30" height="30"><use href="#sogou"/></svg><span>中</span><span>°,</span>
  <svg class="grid-logo" width="14" height="14" viewBox="0 0 14 14" fill="#2878cc"><path d="M0 1h6v5H0zM0 8h6v5H0zM8 8h6v5H8z"/><path d="M9 1h4v4H9z" fill="none" stroke="#2878cc"/></svg>
</div>
<div class="speed">
  <div class="d-flex justify-content-between"><b class="text-danger">↑</b><span>0.8K/s</span></div>
  <div class="d-flex justify-content-between"><b class="text-success">↓</b><span>7.1K/s</span></div>
  <div class="ball">42%</div>
  <svg class="plus" width="20" height="22" viewBox="0 0 20 22"><circle cx="9" cy="13" r="8.500" fill="#2f7fdc"/><path d="M4.500 13h9M9 8.500v9" stroke="#fff" stroke-width="2"/><circle cx="15" cy="6" r="4" fill="#dc3131"/></svg>
</div>
<div class="watermark">https://blog.csdn.net/bubusupe</div>
</body>
</html>
